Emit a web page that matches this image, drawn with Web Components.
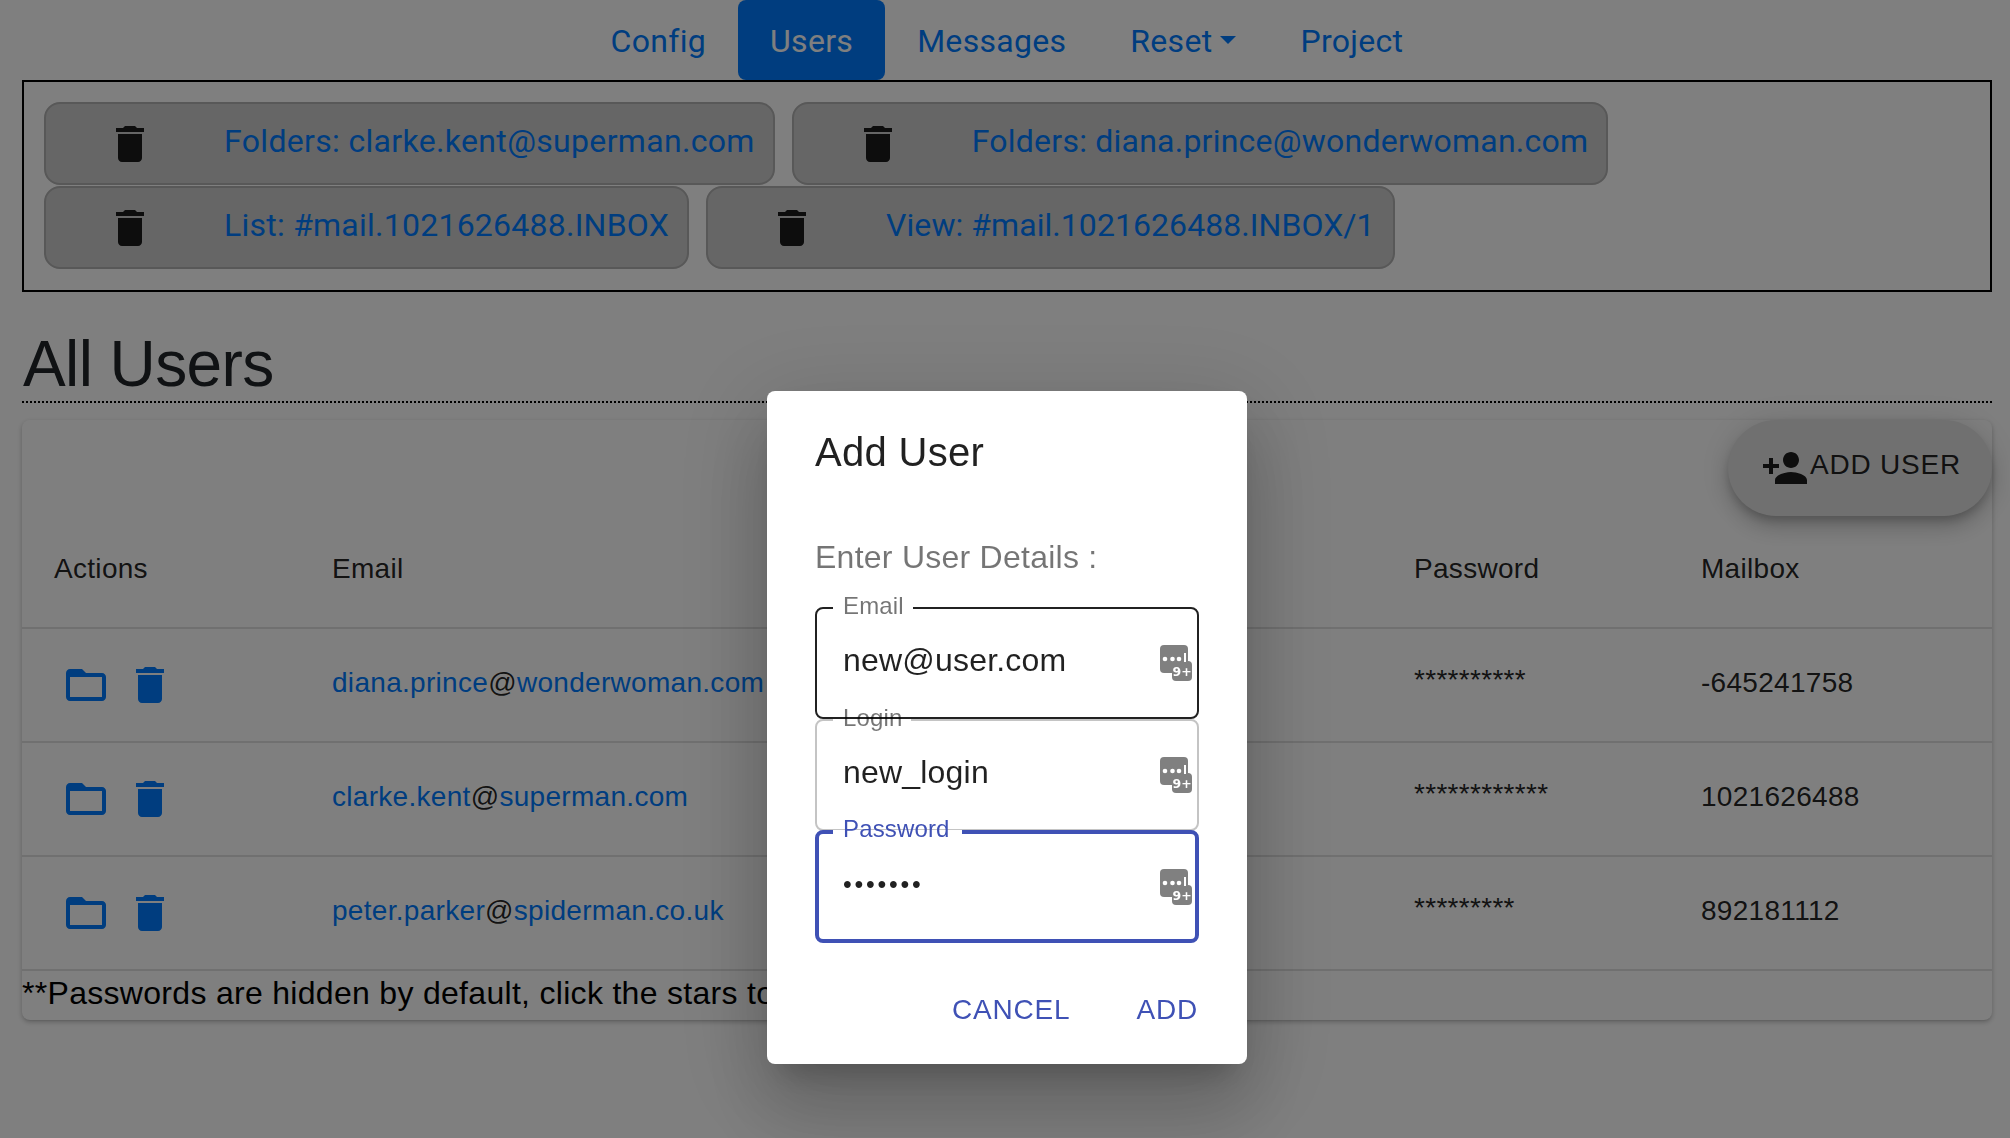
<!DOCTYPE html>
<html>
<head>
<meta charset="utf-8">
<title>Users</title>
<style>
html, body { margin: 0; padding: 0; background: #fff; }
body { font-family: "Liberation Sans", Arial, sans-serif; color: rgba(0,0,0,.87); height: 1138px; overflow: hidden; }
</style>
</head>
<body>
<app-nav>
  <nav-link>Config</nav-link>
  <nav-link active>Users</nav-link>
  <nav-link>Messages</nav-link>
  <nav-link caret>Reset</nav-link>
  <nav-link>Project</nav-link>
</app-nav>

<tab-box>
  <tab-chip>Folders: clarke.kent@superman.com</tab-chip>
  <tab-chip style="letter-spacing:.23px">Folders: diana.prince@wonderwoman.com</tab-chip>
  <tab-chip style="letter-spacing:.24px">List: #mail.1021626488.INBOX</tab-chip>
  <tab-chip style="letter-spacing:.06px">View: #mail.1021626488.INBOX/1</tab-chip>
</tab-box>

<page-title>All Users</page-title>

<users-card>
  <user-row name="diana.prince" domain="wonderwoman.com" stars="**********" mailbox="-645241758"></user-row>
  <user-row name="clarke.kent" domain="superman.com" stars="************" mailbox="1021626488"></user-row>
  <user-row name="peter.parker" domain="spiderman.co.uk" stars="*********" mailbox="892181112"></user-row>
</users-card>

<add-user-dialog>
  <text-field label="Email" value="new@user.com" state="hover" style="z-index:3"></text-field>
  <text-field label="Login" value="new_login" style="z-index:1"></text-field>
  <text-field label="Password" value="•••••••" state="focus" style="z-index:2;margin-top:-1px"></text-field>
</add-user-dialog>

<script>
const ICONS = {
  trash: 'M6 19c0 1.1.9 2 2 2h8c1.1 0 2-.9 2-2V7H6v12zM19 4h-3.5l-1-1h-5l-1 1H5v2h14V4z',
  folder: 'M20 6h-8l-2-2H4c-1.1 0-1.99.9-1.99 2L2 18c0 1.1.9 2 2 2h16c1.1 0 2-.9 2-2V8c0-1.1-.9-2-2-2zm0 12H4V8h16v10z',
  personAdd: 'M15 12c2.21 0 4-1.79 4-4s-1.79-4-4-4-4 1.79-4 4 1.79 4 4 4zm-9-2V7H4v3H1v2h3v3h2v-3h3v-2H6zm9 4c-2.67 0-8 1.34-8 4v2h16v-2c0-2.66-5.33-4-8-4z'
}

class UiIcon extends HTMLElement {
  constructor() {
    super();
    this.attachShadow({ mode: "open" });
  }
  connectedCallback() {
    const d = ICONS[this.getAttribute("name")];
    this.shadowRoot.innerHTML = `
<style>
:host { display: block; width: 48px; height: 48px; flex: none; }
svg { display: block; width: 48px; height: 48px; fill: currentColor; }
</style>
<svg viewBox="0 0 24 24"><path d="${d}"/></svg>
`;
  }
}
customElements.define("ui-icon", UiIcon);

class AppNav extends HTMLElement {
  constructor() {
    super();
    this.attachShadow({ mode: "open" });
    this.shadowRoot.innerHTML = `
<style>
:host { display: flex; justify-content: center; height: 80px; padding-left: 4px; }
</style>
<slot></slot>
`;
  }
}
customElements.define("app-nav", AppNav);

class NavLink extends HTMLElement {
  constructor() {
    super();
    this.attachShadow({ mode: "open" });
    this.shadowRoot.innerHTML = `
<style>
:host {
  display: flex; align-items: center; height: 80px; padding: 2px 32px 0; box-sizing: border-box;
  font: 32px/48px Roboto, "Liberation Sans", sans-serif; letter-spacing: .3px; color: #007bff; border-radius: 8px;
}
:host([active]) { background: #007bff; color: #fff; }
.caret { display: none; width: 0; height: 0; margin-left: 8px; margin-top: -2px;
  border-top: 8px solid currentColor; border-left: 8px solid transparent; border-right: 8px solid transparent; }
:host([caret]) .caret { display: block; }
</style>
<slot></slot><span class="caret"></span>
`;
  }
}
customElements.define("nav-link", NavLink);

class TabBox extends HTMLElement {
  constructor() {
    super();
    this.attachShadow({ mode: "open" });
    this.shadowRoot.innerHTML = `
<style>
:host {
  display: flex; flex-wrap: wrap; column-gap: 17px; row-gap: 1px; align-content: flex-start;
  margin: 0 18px 0 22px; height: 212px; box-sizing: border-box;
  border: 2px solid #000; padding: 20px;
}
</style>
<slot></slot>
`;
  }
}
customElements.define("tab-box", TabBox);

class TabChip extends HTMLElement {
  constructor() {
    super();
    this.attachShadow({ mode: "open" });
    this.shadowRoot.innerHTML = `
<style>
:host {
  display: flex; align-items: center; height: 83px; box-sizing: border-box;
  padding: 0 18px 0 60px; gap: 70px;
  background: #ccc; border: 2px solid #b0b0b0; border-radius: 16px;
  font: 32px/48px Roboto, "Liberation Sans", sans-serif; letter-spacing: .33px; color: #007bff; white-space: nowrap;
}
ui-icon { color: #1a1a1a; }
.label { margin-top: -5px; }
</style>
<ui-icon name="trash"></ui-icon><span class="label"><slot></slot></span>
`;
  }
}
customElements.define("tab-chip", TabChip);

class PageTitle extends HTMLElement {
  constructor() {
    super();
    this.attachShadow({ mode: "open" });
    this.shadowRoot.innerHTML = `
<style>
:host {
  display: block; margin: 0 18px 0 22px; height: 111px; box-sizing: border-box;
  padding-top: 35px; border-bottom: 2px dotted #000; text-indent: 1px;
  font: 64px/74px "Liberation Sans", sans-serif; letter-spacing: -.6px; color: #212529;
}
</style>
<slot></slot>
`;
  }
}
customElements.define("page-title", PageTitle);

const USER_COLS = "grid-template-columns: 278px 1082px 287px 1fr;";

class UsersCard extends HTMLElement {
  constructor() {
    super();
    this.attachShadow({ mode: "open" });
    this.shadowRoot.innerHTML = `
<style>
:host {
  display: block; margin: 17px 18px 0 22px; background: #fff; border-radius: 8px;
  box-shadow: 0 2px 2px -2px rgba(0,0,0,.2), 0 2px 4px rgba(0,0,0,.14), 0 2px 6px rgba(0,0,0,.12);
}
.toolbar { display: flex; justify-content: flex-end; }
.add {
  display: flex; align-items: center; height: 96px; box-sizing: border-box; padding: 0 31px 0 33px;
  background: #e0e0e0; border-radius: 48px; color: rgba(0,0,0,.87);
  font-size: 28px; letter-spacing: .8px;
  box-shadow: 0 6px 10px -2px rgba(0,0,0,.2), 0 12px 20px rgba(0,0,0,.14), 0 2px 36px rgba(0,0,0,.12);
}
.add ui-icon { margin-right: 1px; }
.add span { margin-top: -6px; }
.head {
  display: grid; ${USER_COLS} height: 113px; box-sizing: border-box; align-items: center;
  padding: 0 0 6px 32px; border-bottom: 2px solid #e0e0e0; font-size: 28px; letter-spacing: .3px;
}
.foot { height: 49px; font-size: 32px; line-height: 44px; letter-spacing: .3px; color: #000; }
</style>
<div class="toolbar"><div class="add"><ui-icon name="personAdd"></ui-icon><span>ADD USER</span></div></div>
<div class="head"><span>Actions</span><span>Email</span><span>Password</span><span>Mailbox</span></div>
<slot></slot>
<div class="foot">**Passwords are hidden by default, click the stars to</div>
`;
  }
}
customElements.define("users-card", UsersCard);

class UserRow extends HTMLElement {
  constructor() {
    super();
    this.attachShadow({ mode: "open" });
  }
  connectedCallback() {
    const name = this.getAttribute("name");
    const domain = this.getAttribute("domain");
    const stars = this.getAttribute("stars");
    const mailbox = this.getAttribute("mailbox");
    this.shadowRoot.innerHTML = `
<style>
:host {
  display: grid; ${USER_COLS} height: 114px; box-sizing: border-box; align-items: center;
  padding: 0 0 4px 32px; border-bottom: 2px solid #e0e0e0; font-size: 28px; letter-spacing: .3px;
}
.actions { display: flex; gap: 16px; margin: 4px 0 0 8px; color: #007bff; }
a { color: #007bff; }
.stars { padding-bottom: 6px; }
</style>
<div class="actions"><ui-icon name="folder"></ui-icon><ui-icon name="trash"></ui-icon></div>
<div><a>${name}</a>@<a>${domain}</a></div>
<div class="stars">${stars}</div>
<div>${mailbox}</div>
`;
  }
}
customElements.define("user-row", UserRow);

class TextField extends HTMLElement {
  constructor() {
    super();
    this.attachShadow({ mode: "open" });
  }
  connectedCallback() {
    const label = this.getAttribute("label");
    const value = this.getAttribute("value");
    this.shadowRoot.innerHTML = `
<style>
:host {
  display: block; position: relative; height: 112px; box-sizing: border-box;
  border: 2px solid rgba(0,0,0,.23); border-radius: 8px;
  --label: rgba(0,0,0,.54);
}
:host([state=hover]) { border-color: rgba(0,0,0,.87); }
:host([state=focus]) { border: 4px solid #3f51b5; height: 113px; --label: #3f51b5; }
.value { display: flex; align-items: center; height: 100%; box-sizing: border-box; padding: 0 0 6px 26px; font-size: 32px; letter-spacing: .2px; color: rgba(0,0,0,.87); }
:host([state=focus]) .value { padding: 0 0 4px 24px; font-size: 25px; letter-spacing: 2.75px; }
.notch { position: absolute; top: -4px; left: 16px; padding: 0 9px 0 10px; height: 4px; background: #fff; }
:host([state=focus]) .notch { left: 14px; top: -4px; padding-right: 12px; }
.notch span { position: relative; top: -13px; display: block; line-height: 28px; font-size: 24px; letter-spacing: .15px; color: var(--label); white-space: nowrap; }
:host([state=focus]) .notch span { top: -15px; }
svg { position: absolute; right: 3px; top: 36px; width: 34px; height: 38px; }
:host([state=focus]) svg { right: 1px; top: 35px; }
</style>
<span class="value">${value}</span>
<div class="notch"><span>${label}</span></div>
<svg viewBox="0 0 34 38">
  <rect x="0" y="0" width="28" height="28" rx="4" fill="#808080"/>
  <rect x="12" y="16" width="20" height="20" rx="4" fill="#808080"/>
  <circle cx="5" cy="14" r="2.3" fill="#fff"/><circle cx="12.5" cy="14" r="2.3" fill="#fff"/><circle cx="19" cy="14" r="2.3" fill="#fff"/>
  <rect x="24" y="8" width="2" height="9" fill="#fff"/>
  <text x="12.5" y="30.5" font-family="DejaVu Sans" font-weight="700" font-size="12.5" fill="#fff">9+</text>
</svg>
`;
  }
}
customElements.define("text-field", TextField);

class AddUserDialog extends HTMLElement {
  constructor() {
    super();
    this.attachShadow({ mode: "open" });
    this.shadowRoot.innerHTML = `
<style>
:host {
  position: fixed; inset: 0; display: flex; justify-content: center; align-items: flex-start;
  padding: 391px 0 0 4px; box-sizing: border-box; background: rgba(0,0,0,.5);
}
.paper {
  width: 480px; height: 673px; box-sizing: border-box; padding: 0 48px; background: #fff; border-radius: 8px;
  box-shadow: 0 22px 28px -14px rgba(0,0,0,.2), 0 48px 76px 6px rgba(0,0,0,.14), 0 18px 92px 16px rgba(0,0,0,.12);
}
h2 { margin: 0; padding-top: 37px; font: 400 40px/48px "Liberation Sans", sans-serif; letter-spacing: .3px; color: rgba(0,0,0,.87); }
p { margin: 0; padding-top: 57px; font-size: 32px; line-height: 48px; letter-spacing: .25px; color: rgba(0,0,0,.54); }
.fields { display: flex; flex-direction: column; padding-top: 26px; }
.buttons { display: flex; justify-content: flex-end; gap: 66px; padding: 51px 1px 0 0; font-size: 28px; letter-spacing: .8px; color: #3f51b5; }
</style>
<div class="paper">
  <h2>Add User</h2>
  <p>Enter User Details :</p>
  <div class="fields"><slot></slot></div>
  <div class="buttons"><span>CANCEL</span><span>ADD</span></div>
</div>
`;
  }
}
customElements.define("add-user-dialog", AddUserDialog);
</script>
</body>
</html>
